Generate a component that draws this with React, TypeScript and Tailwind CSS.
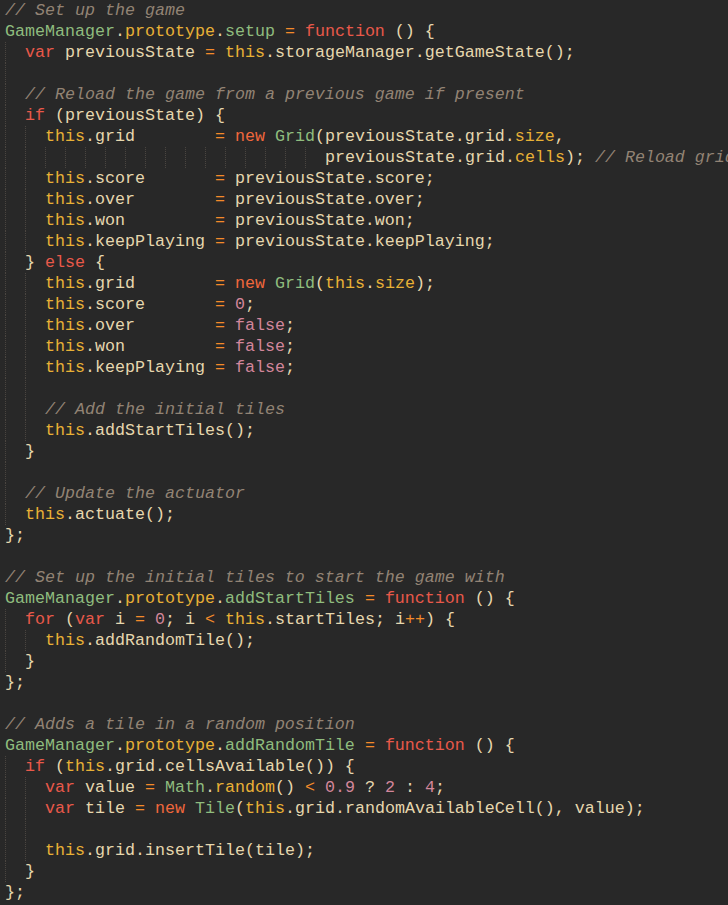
import React from 'react';

type Seg = [string, string];

// token colours (gruvbox-ish dark theme)
const c = 'text-[#928374] italic';
const k = 'text-[#e9594a]';
const n = 'text-[#f0673c]';
const o = 'text-[#f48a2a]';
const t = 'text-[#8fbc7e]';
const y = 'text-[#e8b136]';
const u = 'text-[#d3869b]';
const f = '';

const lines: { ind: number; segs: Seg[] }[] = [
  { ind: 0, segs: [[c, '// Set up the game']] },
  { ind: 0, segs: [[t, 'GameManager'], [f, '.'], [y, 'prototype'], [f, '.'], [t, 'setup'], [f, ' '], [o, '='], [f, ' '], [k, 'function'], [f, ' () {']] },
  { ind: 1, segs: [[k, 'var'], [f, ' previousState '], [o, '='], [f, ' '], [y, 'this'], [f, '.storageManager.getGameState();']] },
  { ind: 1, segs: [] },
  { ind: 1, segs: [[c, '// Reload the game from a previous game if present']] },
  { ind: 1, segs: [[k, 'if'], [f, ' (previousState) {']] },
  { ind: 2, segs: [[y, 'this'], [f, '.grid        '], [o, '='], [f, ' '], [n, 'new'], [f, ' '], [t, 'Grid'], [f, '(previousState.grid.'], [y, 'size'], [f, ',']] },
  { ind: 16, segs: [[f, 'previousState.grid.'], [y, 'cells'], [f, '); '], [c, '// Reload grid']] },
  { ind: 2, segs: [[y, 'this'], [f, '.score       '], [o, '='], [f, ' previousState.score;']] },
  { ind: 2, segs: [[y, 'this'], [f, '.over        '], [o, '='], [f, ' previousState.over;']] },
  { ind: 2, segs: [[y, 'this'], [f, '.won         '], [o, '='], [f, ' previousState.won;']] },
  { ind: 2, segs: [[y, 'this'], [f, '.keepPlaying '], [o, '='], [f, ' previousState.keepPlaying;']] },
  { ind: 1, segs: [[f, '} '], [k, 'else'], [f, ' {']] },
  { ind: 2, segs: [[y, 'this'], [f, '.grid        '], [o, '='], [f, ' '], [n, 'new'], [f, ' '], [t, 'Grid'], [f, '('], [y, 'this'], [f, '.'], [y, 'size'], [f, ');']] },
  { ind: 2, segs: [[y, 'this'], [f, '.score       '], [o, '='], [f, ' '], [u, '0'], [f, ';']] },
  { ind: 2, segs: [[y, 'this'], [f, '.over        '], [o, '='], [f, ' '], [u, 'false'], [f, ';']] },
  { ind: 2, segs: [[y, 'this'], [f, '.won         '], [o, '='], [f, ' '], [u, 'false'], [f, ';']] },
  { ind: 2, segs: [[y, 'this'], [f, '.keepPlaying '], [o, '='], [f, ' '], [u, 'false'], [f, ';']] },
  { ind: 2, segs: [] },
  { ind: 2, segs: [[c, '// Add the initial tiles']] },
  { ind: 2, segs: [[y, 'this'], [f, '.addStartTiles();']] },
  { ind: 1, segs: [[f, '}']] },
  { ind: 1, segs: [] },
  { ind: 1, segs: [[c, '// Update the actuator']] },
  { ind: 1, segs: [[y, 'this'], [f, '.actuate();']] },
  { ind: 0, segs: [[f, '};']] },
  { ind: 0, segs: [] },
  { ind: 0, segs: [[c, '// Set up the initial tiles to start the game with']] },
  { ind: 0, segs: [[t, 'GameManager'], [f, '.'], [y, 'prototype'], [f, '.'], [t, 'addStartTiles'], [f, ' '], [o, '='], [f, ' '], [k, 'function'], [f, ' () {']] },
  { ind: 1, segs: [[k, 'for'], [f, ' ('], [k, 'var'], [f, ' i '], [o, '='], [f, ' '], [u, '0'], [f, '; i '], [o, '<'], [f, ' '], [y, 'this'], [f, '.startTiles; i'], [o, '++'], [f, ') {']] },
  { ind: 2, segs: [[y, 'this'], [f, '.addRandomTile();']] },
  { ind: 1, segs: [[f, '}']] },
  { ind: 0, segs: [[f, '};']] },
  { ind: 0, segs: [] },
  { ind: 0, segs: [[c, '// Adds a tile in a random position']] },
  { ind: 0, segs: [[t, 'GameManager'], [f, '.'], [y, 'prototype'], [f, '.'], [t, 'addRandomTile'], [f, ' '], [o, '='], [f, ' '], [k, 'function'], [f, ' () {']] },
  { ind: 1, segs: [[k, 'if'], [f, ' ('], [y, 'this'], [f, '.grid.cellsAvailable()) {']] },
  { ind: 2, segs: [[k, 'var'], [f, ' value '], [o, '='], [f, ' '], [t, 'Math'], [f, '.'], [y, 'random'], [f, '() '], [o, '<'], [f, ' '], [u, '0.9'], [f, ' ? '], [u, '2'], [f, ' : '], [u, '4'], [f, ';']] },
  { ind: 2, segs: [[k, 'var'], [f, ' tile '], [o, '='], [f, ' '], [n, 'new'], [f, ' '], [t, 'Tile'], [f, '('], [y, 'this'], [f, '.grid.randomAvailableCell(), value);']] },
  { ind: 2, segs: [] },
  { ind: 2, segs: [[y, 'this'], [f, '.grid.insertTile(tile);']] },
  { ind: 1, segs: [[f, '}']] },
  { ind: 0, segs: [[f, '};']] },
];

const CodeLine = ({ ind, segs }: { ind: number; segs: Seg[] }) => (
  <div className="flex h-[21px] items-center whitespace-pre">
    {Array.from({ length: ind }).map((_, i) => (
      <span key={i} className="h-[21px] w-[20px] shrink-0 border-l border-dotted border-[#4a4540]" />
    ))}
    {segs.map(([cls, text], i) => (
      <span key={i} className={cls}>
        {text}
      </span>
    ))}
  </div>
);

const App = () => {
  return (
    <div className="min-h-screen w-full overflow-hidden bg-[#282828] pl-[5px] font-['Liberation_Mono',monospace] text-[16.667px] leading-[21px] text-[#e6d7ae]">
      {lines.map((line, i) => (
        <CodeLine key={i} ind={line.ind} segs={line.segs} />
      ))}
    </div>
  );
};

export default App;
